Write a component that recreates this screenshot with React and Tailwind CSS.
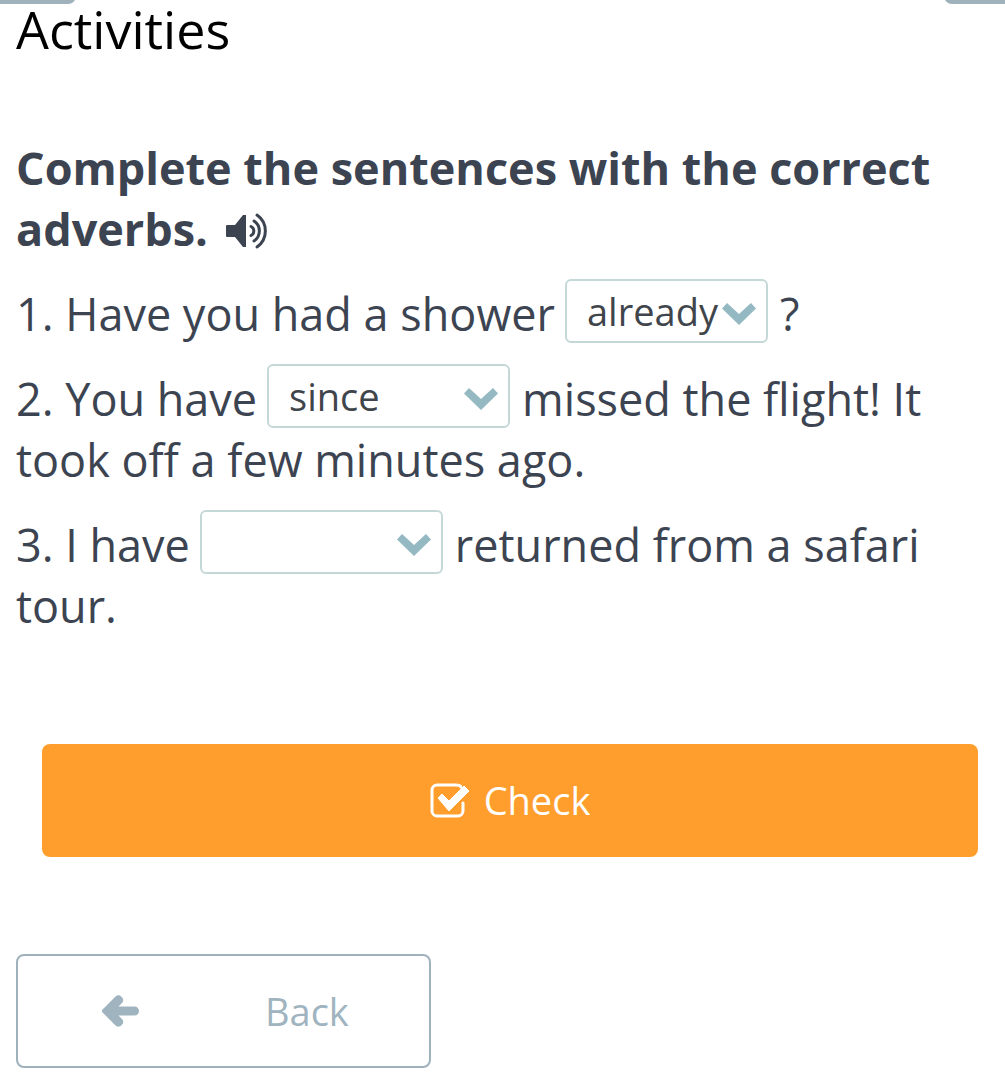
import React, { useState } from "react";

const ADVERBS = ["", "already", "since", "just", "yet"];

function SpeakerIcon() {
  return (
    <svg viewBox="0 0 43 38" className="h-[38px] w-[43px]" aria-hidden="true">
      <path
        d="M1 13h8L17 3h3v32h-3L9 25H1a1 1 0 0 1-1-1V14a1 1 0 0 1 1-1z"
        fill="currentColor"
      />
      <g fill="none" stroke="currentColor" strokeWidth="3" strokeLinecap="round">
        <path d="M25 14.500a5 5 0 0 1 0 9" />
        <path d="M28 9a12 12 0 0 1 0 20" />
        <path d="M31 3a19.500 19.500 0 0 1 0 32" />
      </g>
    </svg>
  );
}

function ChevronIcon({ className }) {
  return (
    <svg viewBox="0 0 34 22" className={className} aria-hidden="true">
      <path d="M5 0 17 11 29 0l5 5.500L17 22 0 5.500z" fill="currentColor" />
    </svg>
  );
}

function CheckIcon() {
  return (
    <svg viewBox="0 0 40 36" className="h-9 w-10" aria-hidden="true">
      <path
        d="M31 4C30 2 28 2 26 2H7A5 5 0 0 0 2 7v21a5 5 0 0 0 5 5h21a5 5 0 0 0 5-5V20"
        fill="none"
        stroke="currentColor"
        strokeWidth="3"
        strokeLinecap="round"
      />
      <path d="m8 15 4-4 7 7L34 3l5 5-20 20z" fill="currentColor" stroke="currentColor" strokeLinejoin="round" />
    </svg>
  );
}

function ArrowIcon({ className }) {
  return (
    <svg viewBox="0 0 37 32" className={className} aria-hidden="true">
      <path
        d="M.600 14.500 13.500 1.500a4.700 4.700 0 0 1 7 6L16.500 11.500H32.500a4.500 4.500 0 0 1 0 9H16.500l4 4a4.700 4.700 0 0 1-7 6L.600 17.500a2 2 0 0 1 0-3z"
        fill="currentColor"
      />
    </svg>
  );
}

function AdverbSelect({ label, initial, className }) {
  const [value, setValue] = useState(initial);

  return (
    <span className={`relative mr-3 ml-2.5 inline-block align-[5px] ${className}`}>
      <select
        aria-label={label}
        value={value}
        onChange={(e) => setValue(e.target.value)}
        className="block h-16 w-full appearance-none rounded-md border-2 border-[#c5d8d8] bg-white pl-5 text-[38px] leading-[56px] text-[#40454c]"
      >
        {ADVERBS.map((adverb) => (
          <option key={adverb} value={adverb}>
            {adverb}
          </option>
        ))}
      </select>
      <ChevronIcon className="pointer-events-none absolute top-6 right-3 h-[22px] w-[34px] text-[#94b9c2]" />
    </span>
  );
}

export default function App() {
  return (
    <main className="w-full bg-white pb-3 font-['Open_Sans','Noto_Sans',sans-serif] text-[#3d4451]">
      {/* bottom edges of the toolbar buttons */}
      <div className="flex h-1 items-end justify-between overflow-hidden">
        <div className="h-4 w-19 shrink-0 rounded-br-lg bg-[#9fb2bb]" />
        <div className="h-4 w-[61px] shrink-0 rounded-bl-lg bg-[#9fb2bb]" />
      </div>

      <div className="px-4">
        <h1 className="text-[52px] leading-[50px] text-black">Activities</h1>

        <h2 className="mt-[83px] text-[45px] leading-[61px] font-bold">
          Complete the sentences with the correct adverbs.
          <button aria-label="Listen" className="ml-[18px] inline-block align-[-4px]">
            <SpeakerIcon />
          </button>
        </h2>

        <div className="mt-5 space-y-5 text-[45px] leading-[61px]">
          <p>
            1. Have you had a shower
            <AdverbSelect label="Adverb 1" initial="already" className="w-[203px]" />?
          </p>
          <p>
            2. You have
            <AdverbSelect label="Adverb 2" initial="since" className="w-[243px]" />
            missed the flight! It took off a few minutes ago.
          </p>
          <p>
            3. I have
            <AdverbSelect label="Adverb 3" initial="" className="w-[243px]" />
            returned from a safari tour.
          </p>
        </div>
      </div>

      <div className="mt-27 pr-[27px] pl-[42px]">
        <button className="flex h-[113px] w-full items-center justify-center gap-3.5 rounded-lg bg-[#ff9e2c] text-[38px] text-white">
          <CheckIcon />
          Check
        </button>
      </div>

      <button className="mt-[97px] ml-4 flex h-[114px] w-[415px] items-center rounded-lg border-2 border-[#9fb2bb] text-[38px] text-[#9fb4bf]">
        <ArrowIcon className="ml-[84px] h-8 w-[37px]" />
        <span className="ml-[126px]">Back</span>
      </button>
    </main>
  );
}
